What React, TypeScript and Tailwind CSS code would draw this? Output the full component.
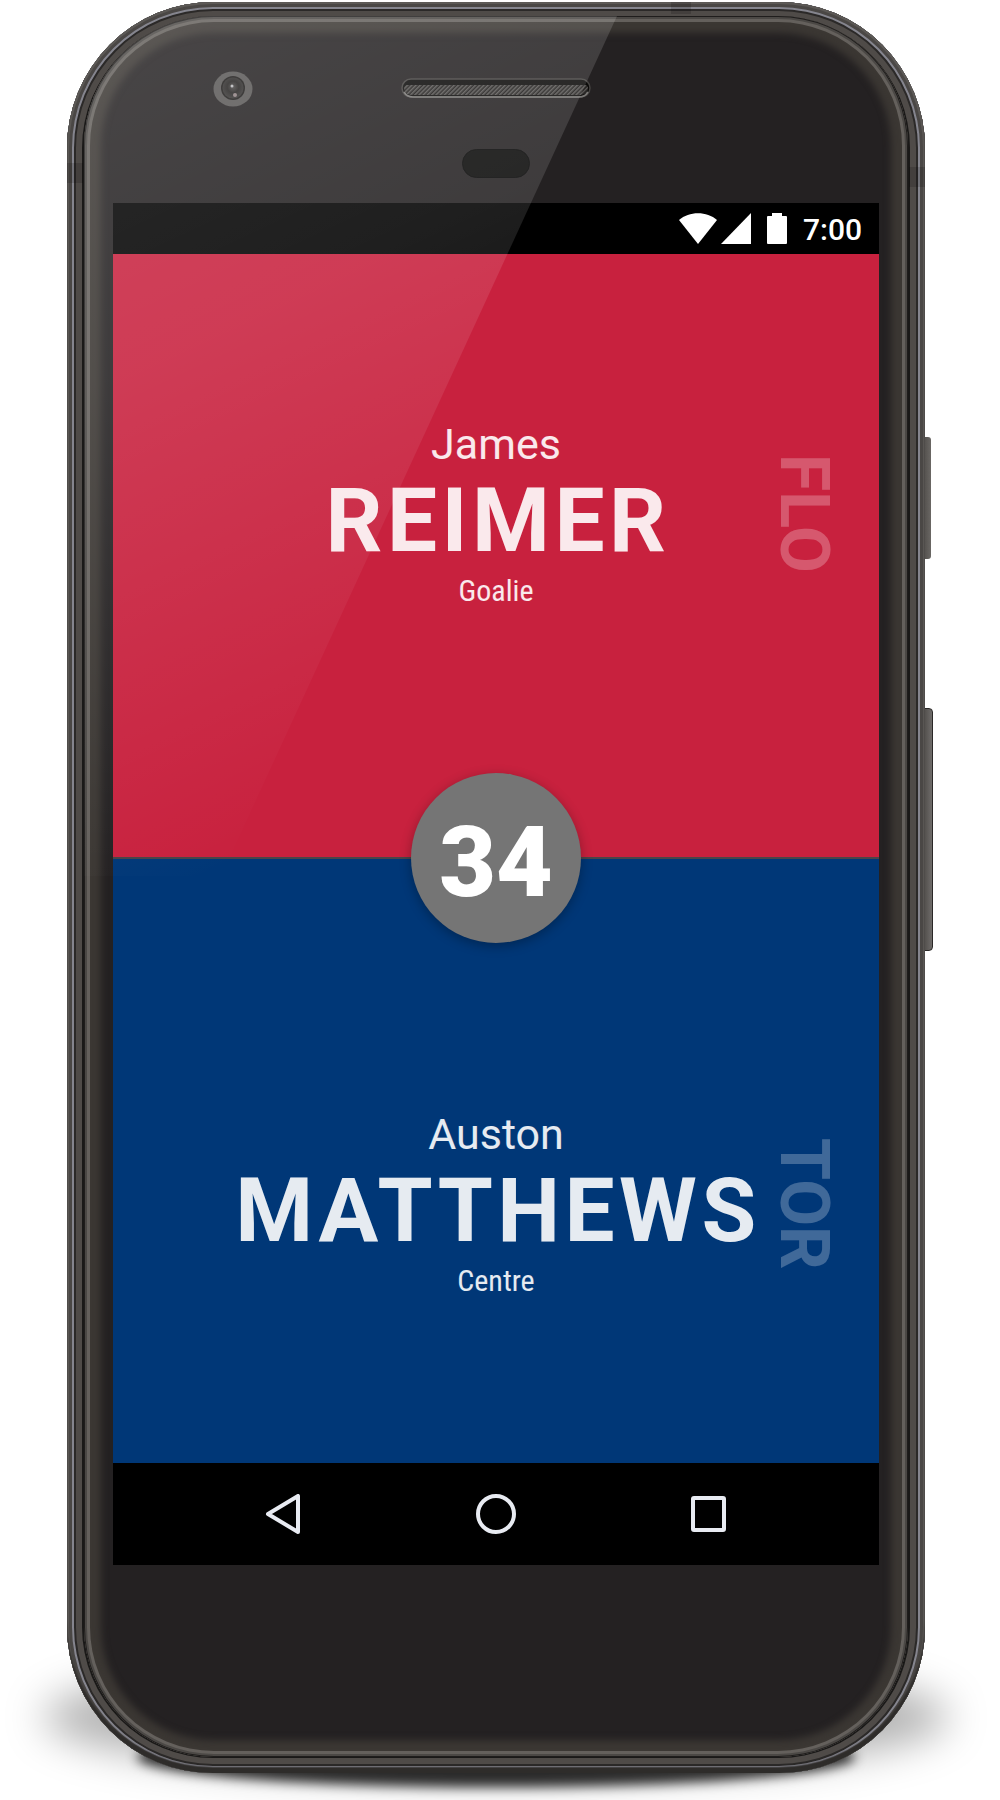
import React from "react";

type Player = {
  first: string;
  last: string;
  position: string;
  team: string;
};

const topPlayer: Player = { first: "James", last: "Reimer", position: "Goalie", team: "FLO" };
const bottomPlayer: Player = { first: "Auston", last: "Matthews", position: "Centre", team: "TOR" };

function PlayerPanel({ player, className }: { player: Player; className: string }) {
  return (
    <section className={`grid min-h-[604px] grid-cols-[1fr_auto_1fr] items-center text-white ${className}`}>
      <div className="col-start-2 flex flex-col items-center text-white/90">
        <p className="text-[43px] leading-[50px]">{player.first}</p>
        <h2 className="pl-1 text-[89px] leading-[104px] font-bold tracking-wider uppercase">{player.last}</h2>
        <p className="font-['Roboto_Condensed',Roboto,sans-serif] text-[30px] leading-[35px]">{player.position}</p>
      </div>
      <p className="mr-[41px] justify-self-end text-[68px] leading-none font-bold text-white/25 [writing-mode:vertical-rl]">
        {player.team}
      </p>
    </section>
  );
}

function StatusBar() {
  return (
    <div className="flex h-[51px] items-center justify-end bg-black pr-[17px] text-white">
      <svg width="38" height="31" viewBox="0 0 38 31" fill="currentColor" aria-hidden="true">
        <path d="M0 7C10-2 28-2 38 7L19 31Z" />
      </svg>
      <svg className="ml-1" width="30" height="31" viewBox="0 0 30 31" fill="currentColor" aria-hidden="true">
        <path d="M30 0V31H0Z" />
      </svg>
      <svg className="ml-4" width="20" height="31" viewBox="0 0 20 31" fill="currentColor" aria-hidden="true">
        <path d="M5 0H15V3H19Q20 3 20 4V30Q20 31 19 31H1Q0 31 0 30V4Q0 3 1 3H5Z" />
      </svg>
      <time className="ml-4 pt-[2px] text-[30px] leading-[35px] font-medium">7:00</time>
    </div>
  );
}

function NavBar() {
  const button = "flex h-full items-center justify-center text-[#e8ebf2]";
  return (
    <nav className="grid h-[102px] grid-cols-3 bg-black px-16">
      <button type="button" aria-label="Back" className={button}>
        <svg width="40" height="40" viewBox="0 0 40 40" fill="none" stroke="currentColor" strokeWidth="4" strokeLinejoin="round">
          <path d="M35 2V38L5 20Z" />
        </svg>
      </button>
      <button type="button" aria-label="Home" className={button}>
        <svg width="40" height="40" viewBox="0 0 40 40" fill="none" stroke="currentColor" strokeWidth="4">
          <circle cx="20" cy="20" r="18" />
        </svg>
      </button>
      <button type="button" aria-label="Overview" className={button}>
        <svg width="40" height="40" viewBox="0 0 40 40" fill="none" stroke="currentColor" strokeWidth="4" strokeLinejoin="round">
          <rect x="4" y="4" width="31" height="32" rx="1" />
        </svg>
      </button>
    </nav>
  );
}

function Camera() {
  return (
    <svg width="40" height="36" viewBox="0 0 40 36" aria-hidden="true">
      <defs>
        <radialGradient id="lens" cx="50%" cy="45%" r="55%">
          <stop offset="0" stopColor="#4a4847" />
          <stop offset="0.5" stopColor="#252322" />
          <stop offset="1" stopColor="#383635" />
        </radialGradient>
      </defs>
      <ellipse cx="20" cy="18" rx="19.5" ry="17.5" fill="#595756" />
      <circle cx="20" cy="17" r="12" fill="#1d1b1a" />
      <circle cx="20" cy="17" r="10.5" fill="url(#lens)" />
      <circle cx="19" cy="15" r="1.5" fill="#b9b9bc" />
      <circle cx="22" cy="24" r="2" fill="#8f8182" />
    </svg>
  );
}

function Speaker() {
  return (
    <svg width="190" height="20" viewBox="0 0 190 20" aria-hidden="true">
      <defs>
        <pattern id="mesh" width="3" height="3" patternUnits="userSpaceOnUse" patternTransform="rotate(45)">
          <rect width="3" height="3" fill="#1c1a19" />
          <rect width="1.5" height="3" fill="#5d5b59" />
        </pattern>
      </defs>
      <rect x="1" y="1" width="188" height="18" rx="9" fill="#0b0a09" stroke="#454341" strokeWidth="1.5" />
      <path d="M5 7H185Q187 8 187 10Q187 17 179 17H11Q3 17 3 10Q3 8 5 7Z" fill="url(#mesh)" />
      <path d="M3 14Q6 19 12 19H178Q184 19 187 14" fill="none" stroke="#7b7977" strokeWidth="1.5" />
    </svg>
  );
}

export default function App() {
  return (
    <main className="overflow-hidden bg-white pt-[2px] pr-[75px] pb-[27px] pl-[67px] font-[Roboto,sans-serif]">
      <div className="relative">
        {/* ground shadow */}
        <div className="absolute -right-6 -bottom-1 -left-6 h-[120px] rounded-[50%] bg-black/30 blur-[20px]" />
        <div className="absolute right-[70px] -bottom-[14px] left-[70px] h-[60px] rounded-[50%] bg-black/80 blur-[6px]" />

        {/* side keys */}
        <div className="absolute top-[435px] -right-[6px] h-[122px] w-[10px] rounded-r-[3px] bg-linear-to-r from-[#4a4744] to-[#6a6764]" />
        <div className="absolute top-[706px] -right-[8px] h-[243px] w-[12px] rounded-r-[4px] border border-[#2a2827] bg-linear-to-r from-[#4a4744] to-[#6f6c6a]" />

        <div className="relative rounded-[146px] bg-[#4c4845] px-[17px] pt-[14px] pb-[16px] shadow-[inset_0_-6px_2px_#2e2c2a,inset_0_0_0_2px_#5c5956,inset_0_0_0_5px_#4a4745,inset_0_0_0_7px_#85858e,inset_0_0_0_9px_#2b2928,inset_0_0_0_15px_#4f4b48,inset_0_0_0_18px_#1a1918]">
          {/* antenna bands */}
          <div className="absolute top-[161px] left-0 h-[20px] w-[16px] bg-black/15" />
          <div className="absolute top-[165px] right-0 h-[20px] w-[16px] bg-black/15" />
          <div className="absolute top-0 right-[234px] h-[12px] w-[20px] bg-black/15" />

          <div className="relative overflow-hidden rounded-[130px] bg-[#242122] px-[29px] shadow-[inset_0_0_0_1px_#1f1d1c,inset_0_0_0_3px_#4b4845,inset_0_0_0_6px_#64605c,inset_0_0_7px_17px_#3b3733]">
            <header className="grid h-[187px] grid-cols-[1fr_auto_1fr]">
              <div className="pt-[55px] pl-[100px]">
                <Camera />
              </div>
              <div className="flex flex-col items-center pt-[62px]">
                <Speaker />
                <div className="mt-[51px] h-[29px] w-[68px] rounded-full border border-[#050505] bg-[#0a0a09]" />
              </div>
            </header>

            <div>
              <StatusBar />
              <PlayerPanel player={topPlayer} className="bg-[#c8213e] pb-[85px]" />
              <div className="relative z-10 -mt-px h-[2px] bg-[#4a4548]">
                <div className="absolute top-1/2 left-1/2 flex size-[170px] -translate-x-1/2 -translate-y-1/2 items-center justify-center rounded-full bg-[#757575] pt-[10px] text-[98px] leading-none font-black text-white shadow-[0_3px_12px_rgba(0,0,0,0.3)]">
                  34
                </div>
              </div>
              <PlayerPanel player={bottomPlayer} className="bg-[#003777] pt-[85px]" />
              <NavBar />
            </div>

            <div className="h-[192px]" />

            {/* diagonal glass reflection */}
            <div className="pointer-events-none absolute inset-x-0 top-0 h-[860px] bg-[linear-gradient(155deg,rgba(255,255,255,0.17),rgba(255,255,255,0.12)_30%,rgba(255,255,255,0)_74%)] [clip-path:polygon(0_0,533px_0,137px_100%,0_100%)]" />
          </div>
        </div>
      </div>
    </main>
  );
}
